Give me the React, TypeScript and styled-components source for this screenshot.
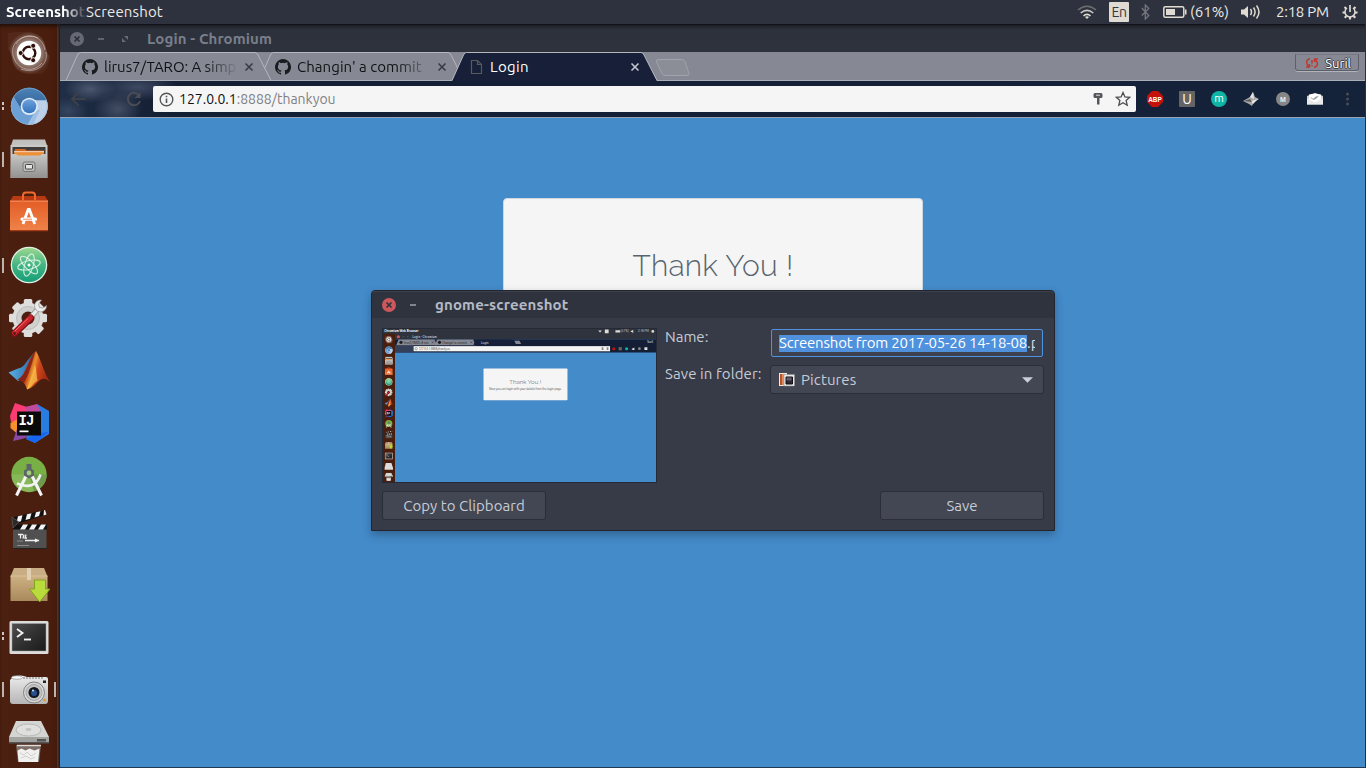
import React from "react";
import styled, { createGlobalStyle } from "styled-components";

const ui = `"Ubuntu", "Noto Sans", "Open Sans", sans-serif`;

const Global = createGlobalStyle`
  * { box-sizing: border-box; }
  html, body { margin: 0; padding: 0; overflow: hidden; }
  body { font-family: ${ui}; font-size: 15px; }
  svg { display: block; flex: none; }
`;

/* ---------- shared ---------- */

const Label = styled.span<{ $size?: number; $track?: number; $color?: string; $bold?: boolean }>`
  font-size: ${(p) => p.$size ?? 15}px;
  letter-spacing: ${(p) => p.$track ?? 0}px;
  color: ${(p) => p.$color ?? "#d3dae3"};
  font-weight: ${(p) => (p.$bold ? 700 : 400)};
  line-height: 20px;
  white-space: pre;
  flex: none;
`;

type IconProps = { x?: number; y?: number; width?: number; height?: number };
const box = (p: IconProps, size = 42) => ({ width: size, height: size, viewBox: `0 0 ${size} ${size}`, ...p });

/* ---------- launcher icons ---------- */

const Dash = (p: IconProps) => (
  <svg {...box(p)}>
    <defs>
      <radialGradient id="dashGlow"><stop offset="0.5" stopColor="#fff" stopOpacity="0.5" /><stop offset="1" stopColor="#fff" stopOpacity="0.04" /></radialGradient>
    </defs>
    <path d="M0 1C12-1 30-2 35 8c4 7 3 14 7 16-1 8-3 14-7 17C24 44 9 42 6 33 3 26 4 20 0 17Z" fill="url(#dashGlow)" />
    <path d="M5 23C2 8 18 1 30 6M38 20c3 14-12 22-25 17M8 12C16-1 34 2 37 18M34 31c-9 11-26 7-29-8" fill="none" stroke="#e9ddd8" strokeOpacity="0.5" />
    <circle cx="21" cy="21" r="12.2" fill="#fff" />
    <circle cx="21" cy="21" r="6.3" fill="none" stroke="#2f1009" strokeWidth="2.4" />
    <path d="M21 21 10 21M21 21l5.500-9.500M21 21l5.500 9.500" stroke="#fff" strokeWidth="1" />
    <circle cx="12.700" cy="21" r="2.500" fill="#2f1009" stroke="#fff" strokeWidth="0.900" />
    <circle cx="25.200" cy="13.800" r="2.500" fill="#2f1009" stroke="#fff" strokeWidth="0.900" />
    <circle cx="25.200" cy="28.200" r="2.500" fill="#2f1009" stroke="#fff" strokeWidth="0.900" />
  </svg>
);

const Chromium = (p: IconProps) => (
  <svg {...box(p)}>
    <defs>
      <linearGradient id="crCore" x1="0" y1="0" x2="0" y2="1"><stop offset="0" stopColor="#6ea3dc" /><stop offset="1" stopColor="#3272bd" /></linearGradient>
      <linearGradient id="crTop" x1="0" y1="0" x2="0" y2="1"><stop offset="0" stopColor="#4d83b8" /><stop offset="1" stopColor="#2f5f92" /></linearGradient>
    </defs>
    <circle cx="21.3" cy="21.3" r="18.4" fill="#b9cfe8" />
    <path d="M21.3 21.3 39 15.5A18.4 18.4 0 0 0 5.5 11.8L13 25Z" fill="url(#crTop)" />
    <path d="M5.5 11.8A18.4 18.4 0 0 0 19.5 39.7L28 25.5 14 25Z" fill="#6c9fd3" />
    <path d="M20 39.7A18.4 18.4 0 0 0 38.7 15.3H22L29 25Z" fill="#bdd1e9" />
    <path d="m29 25-9.500 14.700 6-1 6.500-14Z" fill="#91b7df" opacity="0.7" />
    <circle cx="21.3" cy="21.3" r="8.6" fill="#e3edf8" />
    <circle cx="21.3" cy="21.3" r="7" fill="url(#crCore)" />
    <circle cx="21.3" cy="21.3" r="18" fill="none" stroke="#8fb3da" strokeOpacity="0.6" strokeWidth="0.8" />
  </svg>
);

const Files = (p: IconProps) => (
  <svg {...box(p)}>
    <defs>
      <linearGradient id="fTop" x1="0" y1="0" x2="0" y2="1"><stop offset="0" stopColor="#bdbdbb" /><stop offset="1" stopColor="#e6e6e4" /></linearGradient>
      <linearGradient id="fFront" x1="0" y1="0" x2="0" y2="1"><stop offset="0" stopColor="#c6c6c4" /><stop offset="1" stopColor="#929290" /></linearGradient>
    </defs>
    <path d="M5 1.500h32l2 6v31.500H3V7.500Z" fill="url(#fTop)" />
    <path d="M2.500 7h37v33h-37Z" fill="#c9c9c7" />
    <path d="M4.500 9h33v10h-33Z" fill="#3e3d3b" />
    <path d="M7 11h10l1.500 1.500H36V17H6Z" fill="#d9661f" />
    <path d="M6 13.200h30v1.300H6Z" fill="#f4e3cf" />
    <path d="M6.500 14.500h29V18h-29Z" fill="#ee8f33" />
    <path d="M3 16h5l2 1.500h22l2-1.500h5v24H3Z" fill="url(#fFront)" />
    <rect x="15" y="24" width="12" height="9.500" rx="2" fill="#bbb" stroke="#777" />
    <rect x="17.500" y="26.500" width="7" height="4.500" rx="0.800" fill="#e6e6e6" stroke="#444" />
  </svg>
);

const Software = (p: IconProps) => (
  <svg {...box(p)}>
    <defs><linearGradient id="swBag" x1="0" y1="0" x2="0" y2="1"><stop offset="0" stopColor="#e35c26" /><stop offset="1" stopColor="#ef8349" /></linearGradient></defs>
    <path d="M5 5h32l3 5H2Z" fill="#b83a12" />
    <path d="M2 9.500h38v30H2Z" fill="url(#swBag)" />
    <path d="M2 9.500h38V11H2Z" fill="#f39a6b" opacity="0.6" />
    <path d="M15 12V4.500q0-3 3-3h6q3 0 3 3V12" fill="none" stroke="#ef6a2f" strokeWidth="2" />
    <path d="M15 33 20.200 18.500h1.200L26.700 33" fill="none" stroke="#fff" strokeWidth="2.800" />
    <rect x="12.500" y="26.500" width="16.500" height="3.200" rx="1.500" fill="#fff" />
    <path d="M15 28.200h9" stroke="#e9733a" strokeWidth="0.800" />
    <path d="M2 39h38v1.200H2Z" fill="#a43a15" />
  </svg>
);

const Atom = (p: IconProps) => (
  <svg {...box(p)}>
    <defs><linearGradient id="atG" x1="0" y1="0" x2="0" y2="1"><stop offset="0" stopColor="#9ad68f" /><stop offset="0.500" stopColor="#43b582" /><stop offset="1" stopColor="#169e78" /></linearGradient></defs>
    <circle cx="21" cy="21" r="18.300" fill="#dff0e3" />
    <circle cx="21" cy="21" r="17" fill="url(#atG)" />
    <g fill="none" stroke="#e9f7ee" strokeOpacity="0.850" strokeWidth="1.100">
      <ellipse cx="21" cy="21" rx="11.500" ry="4.300" transform="rotate(-14 21 21)" />
      <ellipse cx="21" cy="21" rx="11.500" ry="4.300" transform="rotate(46 21 21)" />
      <ellipse cx="21" cy="21" rx="11.500" ry="4.300" transform="rotate(106 21 21)" />
    </g>
    <circle cx="21" cy="21" r="1.500" fill="#fff" />
  </svg>
);

const Settings = (p: IconProps) => (
  <svg {...box(p)}>
    <g fill="#dededc">
      {[0, 45, 90, 135].map((a) => <rect key={a} x="15.800" y="2" width="8.500" height="38" rx="1.500" transform={`rotate(${a} 20 21)`} />)}
      <circle cx="20" cy="21" r="15.500" />
    </g>
    <circle cx="20" cy="21" r="11.500" fill="#d0d0ce" stroke="#bdbdbb" />
    <circle cx="20" cy="21" r="6.500" fill="#4a1f10" />
    <path d="m20 23 9-10" stroke="#8e8e8c" strokeWidth="5" />
    <path d="m21 22 9-10" stroke="#e9e9e8" strokeWidth="3.500" />
    <path d="M38.500 8.500a6 6 0 1 1-5-5.500l-3 4 1 3.500 3.500.5Z" fill="#ececec" stroke="#8c8c8a" strokeWidth="0.700" />
    <path d="M6.500 36.500 22.500 21" stroke="#7d0f14" strokeWidth="7" strokeLinecap="round" />
    <path d="M6.500 36 22.500 20.700" stroke="#c8242c" strokeWidth="5" strokeLinecap="round" />
    <path d="M7 34 20 21.500" stroke="#f0777a" strokeWidth="1" strokeLinecap="round" />
    <circle cx="6.500" cy="36.500" r="1.400" fill="#4a1f10" />
  </svg>
);

const Matlab = (p: IconProps) => (
  <svg {...box(p)}>
    <defs>
      <linearGradient id="mlA" x1="0.100" y1="0" x2="1" y2="0.300"><stop offset="0" stopColor="#7d1d12" /><stop offset="0.380" stopColor="#b93a1a" /><stop offset="0.530" stopColor="#e8922f" /><stop offset="0.680" stopColor="#cf481b" /><stop offset="1" stopColor="#a32c14" /></linearGradient>
      <linearGradient id="mlB"><stop offset="0" stopColor="#5cb0e6" /><stop offset="1" stopColor="#2463a0" /></linearGradient>
    </defs>
    <path d="M.500 22.500 10 18.500c3-.5 5-2 7-4.500 3-4 6-9 10.500-12L18 27l-8 4Z" fill="url(#mlB)" />
    <path d="M9.500 29.500c5-2 7-8 11-17 2-5 4.500-9.500 7.500-11.500 3.500 5 8 22 14 31-4-4-8-4-11-1-3.500 3.500-6.500 7-12 8.500-1-5-4.500-9-9.500-10Z" fill="url(#mlA)" />
    <path d="M9.500 29.500c6-2 8-9 12-18 2-5 4-9 6-10C24 12 21 26 15.500 33c-2-2.500-3.500-3-6-3.500Z" fill="#7f1f14" opacity="0.800" />
    <path d="M19 39.500c3-8 6-18 8-25 1.500 4 1.500 11 2.500 16-3.500 2-6.500 7.500-10.500 9Z" fill="#fbc64c" opacity="0.750" />
  </svg>
);

const Idea = (p: IconProps) => (
  <svg {...box(p)}>
    <path d="m7 0 15 5-2 14H3L2 13Z" fill="#fb3b74" />
    <path d="m2.500 20 7-4 5 10-6 4-6-5Z" fill="#f7902c" />
    <path d="M5 38 9 26l14-4 3 10-12 4Z" fill="#8a4aa3" />
    <path d="m29 1 12 7v23L27 40l-9-4 7-14Z" fill="#2a7de0" />
    <path d="m17 4 12-3 4 8-12 6Z" fill="#c04a9d" />
    <path d="m31 30 10-1-14 11-9-4Z" fill="#1766f3" />
    <rect x="9" y="8.500" width="24" height="24" fill="#0a0a0a" />
    <text x="10.500" y="22" fontFamily="Liberation Mono, monospace" fontWeight="700" fontSize="14" letterSpacing="-0.800" fill="#fff">IJ</text>
    <path d="M11.500 27.500h9v1.700h-9Z" fill="#fff" />
  </svg>
);

const AndroidStudio = (p: IconProps) => (
  <svg {...box(p)}>
    <circle cx="21" cy="18.500" r="17.700" fill="#79b045" />
    <path d="M21 18.500h17.700A17.700 17.700 0 0 1 26 35.500Z" fill="#5f9138" />
    <path d="M3.300 18.500a17.700 17.700 0 0 0 35.400 0Z" fill="#fff" opacity="0.100" />
    <path d="M9 27.500Q27 35 32.500 18.500" fill="none" stroke="#f1f1f1" strokeWidth="2.600" />
    <path d="m18.500 19-10 20.500M23.500 19l10 20.500" stroke="#f4f4f4" strokeWidth="3" strokeLinecap="butt" />
    <path d="M18.500 8h5v5l2.500 1.500v5L21 22.500 16 19.500v-5l2.500-1.500Z" fill="#5d6569" />
    <circle cx="21" cy="17" r="2.400" fill="#a3cf78" />
  </svg>
);

const Clapper = (p: IconProps) => (
  <svg {...box(p)}>
    <path d="M4 8.500 37 1l1.500 4.500L6 16Z" fill="#111" />
    <path d="m10 7.200 4.500-1-1.500 6-4.500 1.300ZM19 5.200l4.500-1-1.500 5.500L17.500 11ZM28 3.200l4.500-1L31 7l-4.500 1.500ZM36 1.300l1-.3 1.500 4.500-3 .9Z" fill="#f4f4f4" />
    <path d="M5 17h33.500v22.500H5Z" fill="#505050" />
    <path d="M5 15.500h34v5H5Z" fill="#111" />
    <path d="M15 15.500h5l-3 5h-5ZM24 15.500h5l-3 5h-5ZM33 15.500h5l-3 5h-5Z" fill="#f4f4f4" />
    <path d="m4 8 7 5-6 6Z" fill="#2a2a2a" stroke="#666" strokeWidth="0.600" />
    <path d="M10 25.500h5m-2.500 0v4m3.500-4-1 4m3-4-1 3.500h2M17 31.500h14m-4-1.500 3 1.500-3 1.500" stroke="#f0f0f0" strokeWidth="1.300" fill="none" />
    <path d="M9 32h6M9 36.500h12" stroke="#999" strokeWidth="0.800" />
    <path d="M5 39h34v1H5Z" fill="#222" />
  </svg>
);

const Package = (p: IconProps) => (
  <svg {...box(p)}>
    <defs><linearGradient id="pkG" x1="0" y1="0" x2="0" y2="1"><stop offset="0" stopColor="#cdb083" /><stop offset="1" stopColor="#a98a5c" /></linearGradient></defs>
    <path d="M6 6h30l3.500 8.500h-37Z" fill="#c8ad85" />
    <path d="M2.500 14h37v25h-37Z" fill="url(#pkG)" />
    <path d="M2.500 14h37" stroke="#d9c195" />
    <path d="M19 6h4v12h-4Z" fill="#e0cfb1" />
    <path d="M26.500 18h11v9h4.500L31.700 40 21.500 27h5Z" fill="#b9dc3c" stroke="#7ba016" strokeWidth="0.900" />
  </svg>
);

const Terminal = (p: IconProps) => (
  <svg {...box(p)}>
    <defs><linearGradient id="tmG" x1="0" y1="0" x2="1" y2="1"><stop offset="0" stopColor="#4f4f4f" /><stop offset="0.600" stopColor="#2c2c2c" /><stop offset="1" stopColor="#1b1b1b" /></linearGradient></defs>
    <rect x="1.500" y="6" width="39" height="33" rx="1.500" fill="#dcdcdc" />
    <rect x="4" y="8.500" width="34" height="27.500" fill="url(#tmG)" stroke="#a5a5a5" strokeWidth="0.500" />
    <path d="m9 14 5.500 4L9 22" fill="none" stroke="#f2f2f2" strokeWidth="1.900" />
    <path d="M16 24.500h7" stroke="#f2f2f2" strokeWidth="1.900" />
  </svg>
);

const Camera = (p: IconProps) => (
  <svg {...box(p)}>
    <defs><linearGradient id="cmG" x1="0" y1="0" x2="0" y2="1"><stop offset="0" stopColor="#ececec" /><stop offset="1" stopColor="#b5b5b5" /></linearGradient></defs>
    <path d="M5 9q8-3 14 0h19q2 0 2 2v22q0 3-3 3H5q-3 0-3-3V12Z" fill="url(#cmG)" />
    <ellipse cx="9" cy="9.500" rx="5.500" ry="1.800" fill="#f8f8f8" stroke="#8d8d8d" strokeWidth="0.700" />
    <path d="M15 10h20" stroke="#777" strokeDasharray="2 1" />
    <circle cx="26" cy="24.500" r="10.500" fill="#d8d8d8" stroke="#777" strokeWidth="0.900" />
    <circle cx="26" cy="24.500" r="8" fill="#c4c4c4" stroke="#999" strokeWidth="0.800" />
    <circle cx="26" cy="24.500" r="5.500" fill="#14171f" />
    <circle cx="26" cy="25" r="3" fill="#25508c" />
    <circle cx="25" cy="22.500" r="1" fill="#dfe8f3" />
    <path d="M35 12.500h3v2.500h-3Z" fill="#222" />
    <circle cx="36.500" cy="32" r="1.300" fill="#e69324" />
  </svg>
);

const Trash = (p: IconProps) => (
  <svg {...box(p)}>
    <path d="m8 24 2 17h21l2-17Z" fill="#8f8884" opacity="0.750" />
    <path d="m9.500 29.500 4-2 4 2 4-2 5 2 5-2-1.500 13.500H10.500Z" fill="#f0f0ef" />
    <path d="m12 32 4 2 3-3 4 4 5-3M13 37l5-2 5 3 4-2" stroke="#cfcfcf" fill="none" />
    <path d="M8 0h25l8 16v6H1v-6Z" fill="#d4d4d2" />
    <path d="M1 16h40v6H1Z" fill="#a3a3a1" />
    <path d="M1 21h40v1.500H1ZM29 18h9v2.500h-9Z" fill="#555" />
    <ellipse cx="20.500" cy="9" rx="12.500" ry="6" fill="#dfdfdd" stroke="#b7b7b5" />
    <ellipse cx="20.500" cy="8.500" rx="3" ry="1.400" fill="#c2c2c0" />
    <path d="M9 24.500h24" stroke="#dedede" strokeWidth="1.500" />
  </svg>
);

type Run = "none" | "single" | "multi";
const apps: { Icon: React.FC<IconProps>; run: Run; active?: boolean }[] = [
  { Icon: Dash, run: "none" }, { Icon: Chromium, run: "multi" }, { Icon: Files, run: "single" },
  { Icon: Software, run: "none" }, { Icon: Atom, run: "single" }, { Icon: Settings, run: "none" },
  { Icon: Matlab, run: "none" }, { Icon: Idea, run: "none" }, { Icon: AndroidStudio, run: "none" },
  { Icon: Clapper, run: "none" }, { Icon: Package, run: "none" }, { Icon: Terminal, run: "multi" },
  { Icon: Camera, run: "single", active: true }, { Icon: Trash, run: "none" },
];

/* ---------- desktop ---------- */

const Desktop = styled.div`
  position: relative;
  width: 1366px;
  height: 768px;
  display: flex;
  flex-direction: column;
  overflow: hidden;
  background: #2f343f;
`;

const TopBar = styled.header`
  height: 24px;
  flex: none;
  display: flex;
  align-items: center;
  padding: 0 8px 0 6px;
  background: #2e323e;
`;
const AppName = styled.div`
  width: 80px;
  overflow: hidden;
  display: flex;
  mask-image: linear-gradient(90deg, #000 58px, rgba(0, 0, 0, 0.1) 78px);
`;
const Indicators = styled.div`
  margin-left: auto;
  display: flex;
  align-items: center;
`;
const Slot = styled.div<{ $w: number }>`
  width: ${(p) => p.$w}px;
  height: 24px;
  display: flex;
  align-items: center;
  flex: none;
`;
const LangBadge = styled.div`
  width: 20px;
  height: 20px;
  display: grid;
  place-items: center;
  border-radius: 1px;
  background: #dfdbd2;
`;

const Workspace = styled.div`
  flex: 1;
  min-height: 0;
  display: flex;
`;

const Launcher = styled.nav`
  width: 60px;
  flex: none;
  padding-top: 2px;
  border-right: 1px solid #1d1e22;
  background: linear-gradient(90deg, #4b2011 0, #4a1e0e 85%, #451b0d 96%, #5a3526 97%, #3a2b26 100%);
  box-shadow: inset 0 4px 4px -2px rgba(0, 0, 0, 0.6);
`;
const LauncherItem = styled.div`
  height: 53px;
  display: flex;
  align-items: center;
  padding-top: 1px;
`;
const Mark = styled.div<{ $run: Run; $on: boolean; $right?: boolean }>`
  width: 2px;
  height: ${(p) => (p.$run === "multi" ? 8 : 15)}px;
  margin: ${(p) => (p.$right ? "0 0 0 4px" : "0 4px 0 2px")};
  flex: none;
  visibility: ${(p) => (p.$on ? "visible" : "hidden")};
  background: ${(p) => (p.$run === "multi" ? "linear-gradient(#cfc5c1 3px, transparent 3px 5px, #cfc5c1 5px)" : "#bfb3ae")};
`;

/* ---------- browser ---------- */

const Browser = styled.section`
  flex: 1;
  min-width: 0;
  display: flex;
  flex-direction: column;
  border-right: 1px solid #26303f;
  border-bottom: 1px solid #1f3a56;
`;
const WindowTitle = styled.div`
  height: 28px;
  flex: none;
  display: flex;
  align-items: center;
  padding: 1px 0 0 10px;
  background: linear-gradient(#0d0e12 0, #21242c 2px, #2d313c 6px, #2e323d);
`;
const TabStrip = styled.div`
  height: 29px;
  flex: none;
  display: flex;
  padding-left: 6px;
  background: linear-gradient(transparent 28px, #aaaeb6 28px), #868993;
`;
const Tab = styled.div<{ $active?: boolean; $level: number }>`
  position: relative;
  width: 206px;
  height: 29px;
  margin-right: -13px;
  display: flex;
  align-items: center;
  padding-left: ${(p) => (p.$active ? 18 : 16)}px;
  z-index: ${(p) => p.$level};
`;
const TabShape = styled.svg`
  position: absolute;
  inset: 0;
  z-index: -1;
`;
const TabText = styled.div<{ $fade?: boolean }>`
  width: 132px;
  overflow: hidden;
  display: flex;
  margin: 0 8px 0 6px;
  ${(p) => p.$fade && "mask-image: linear-gradient(90deg, #000 76%, transparent 102%);"}
`;
const NewTab = styled.div`
  margin: 7px 0 0 10px;
`;
const Profile = styled.div`
  margin: 2px 6px 0 auto;
  width: 64px;
  height: 17px;
  display: flex;
  align-items: center;
  justify-content: space-between;
  padding: 1px 7px 0 9px;
  border: 1px solid #5d606b;
  border-top-color: #767984;
  border-radius: 0 0 3px 3px;
  box-shadow: 0 1px 0 #b1b4bb;
  text-shadow: 1px 0 0 #3c3e44, -1px 0 0 #3c3e44, 0 1px 0 #3c3e44, 0 -1px 0 #3c3e44;
`;
const Toolbar = styled.div`
  height: 37px;
  flex: none;
  display: flex;
  align-items: center;
  border-bottom: 1px solid #9aa3b4;
  background:
    radial-gradient(ellipse 26px 14px at 30px 8px, rgba(120, 130, 155, 0.5), transparent),
    radial-gradient(ellipse 24px 18px at 58px 28px, rgba(130, 138, 160, 0.4), transparent),
    radial-gradient(ellipse 20px 14px at 8px 30px, rgba(90, 105, 135, 0.4), transparent),
    radial-gradient(ellipse 40px 14px at 78px 6px, rgba(100, 112, 140, 0.5), transparent),
    linear-gradient(90deg, #1f2e46 0, #141e33 110px, #151f36 800px, #14233a);
`;
const NavIcons = styled.div`
  width: 93px;
  flex: none;
  display: flex;
  padding-left: 10px;
  gap: 40px;
`;
const Omnibox = styled.div`
  width: 983px;
  height: 26px;
  flex: none;
  display: flex;
  align-items: center;
  padding: 0 5px 0 6px;
  background: #f5f5f5;
  border-radius: 2px;
`;
const Extensions = styled.div`
  flex: 1;
  display: flex;
  align-items: center;
  padding-left: 11px;
  gap: 16px;
`;
const Page = styled.main`
  flex: 1;
  min-height: 0;
  padding-top: 80px;
  background: #448bca;
`;
const Card = styled.div`
  width: 420px;
  height: 170px;
  margin: 0 auto 0 443px;
  display: flex;
  justify-content: center;
  padding-top: 46px;
  border: 1px solid #cfd8e0;
  border-radius: 4px;
  background: #f5f5f5;
`;
const Heading = styled.h1`
  margin: 0;
  font: 300 30px/42px Raleway, Lato, sans-serif;
  letter-spacing: 0.25px;
  color: #57646f;
  white-space: pre;
`;

/* ---------- save dialog ---------- */

const Dialog = styled.div`
  position: absolute;
  left: 371px;
  top: 290px;
  width: 684px;
  height: 241px;
  z-index: 5;
  display: flex;
  flex-direction: column;
  border: 1px solid #22252d;
  border-radius: 4px 4px 0 0;
  background: #373b47;
  box-shadow: 0 4px 10px rgba(0, 0, 0, 0.28);
`;
const DialogTitle = styled.div`
  height: 27px;
  flex: none;
  display: flex;
  align-items: center;
  padding-left: 10px;
  border-top: 1px solid #3c404c;
  border-radius: 3px 3px 0 0;
  background: #2f333e;
`;
const DialogBody = styled.div`
  height: 154px;
  margin-top: 10px;
  display: flex;
  padding: 0 11px 0 10px;
`;
const Preview = styled.div`
  width: 275px;
  height: 155px;
  border: 1px solid #252a36;
  margin-right: 8px;
  flex: none;
`;
const Form = styled.div`
  flex: 1;
  min-width: 0;
  display: flex;
  flex-direction: column;
  gap: 7px;
  padding-top: 1px;
`;
const Row = styled.div`
  display: flex;
  height: 29px;
`;
const RowLabel = styled.div<{ $up: number }>`
  width: 106px;
  flex: none;
  margin-top: ${(p) => -p.$up}px;
`;
const Entry = styled.div`
  flex: 1;
  height: 28px;
  min-width: 0;
  display: flex;
  align-items: center;
  padding: 0 7px;
  border: 1px solid #4f93e0;
  border-radius: 2px;
  background: #3e424e;
`;
const EntryClip = styled.div`
  flex: 1;
  min-width: 0;
  overflow: hidden;
  display: flex;
`;
const Selection = styled.div`
  background: #4f91dd;
  height: 17px;
  width: 248px;
  flex: none;
  display: flex;
  align-items: center;
  align-self: center;
`;
const Combo = styled.div`
  flex: 1;
  height: 29px;
  margin: 0 -1px;
  display: flex;
  align-items: center;
  gap: 6px;
  padding: 0 10px 0 8px;
  border: 1px solid #2b2e38;
  border-radius: 3px;
  background: #434754;
`;
const Push = styled.div`
  margin-left: auto;
`;
const Actions = styled.div`
  display: flex;
  justify-content: space-between;
  padding: 0 10px;
  margin-top: 9px;
`;
const Button = styled.button`
  width: 164px;
  height: 29px;
  display: flex;
  align-items: center;
  justify-content: center;
  padding: 0;
  border: 1px solid #2b2e38;
  border-radius: 3px;
  background: #434754;
  font-family: ${ui};
`;

/* ---------- small glyphs ---------- */

const Github = () => (
  <svg width="16" height="16" viewBox="0 0 16 16" fill="#1b1c20">
    <path d="M8 0a8 8 0 0 0-2.530 15.590c.4.070.550-.170.550-.380v-1.490c-2.230.490-2.690-.940-2.690-.940-.360-.930-.890-1.170-.890-1.170-.730-.5.050-.490.050-.490.800.060 1.230.830 1.230.830.710 1.220 1.870.870 2.330.660.070-.520.280-.870.510-1.070-1.780-.2-3.640-.890-3.640-3.950 0-.870.310-1.590.820-2.150-.080-.2-.360-1.020.080-2.120 0 0 .670-.210 2.200.820a7.600 7.600 0 0 1 4 0c1.530-1.040 2.200-.820 2.200-.820.440 1.100.160 1.920.080 2.120.510.560.820 1.270.820 2.150 0 3.070-1.870 3.750-3.650 3.950.290.250.540.730.540 1.480v2.200c0 .210.150.460.550.380A8 8 0 0 0 8 0Z" />
  </svg>
);
const TabClose = ({ c }: { c: string }) => (
  <svg width="10" height="10" viewBox="0 0 10 10"><path d="m1.500 1.500 7 7m0-7-7 7" stroke={c} strokeWidth="1.600" /></svg>
);
const WinClose = ({ bg, fg }: { bg: string; fg: string }) => (
  <svg width="14" height="14" viewBox="0 0 14 14"><circle cx="7" cy="7" r="7" fill={bg} /><path d="m4.500 4.500 5 5m0-5-5 5" stroke={fg} strokeWidth="1.700" /></svg>
);
const WinMin = ({ c, w }: { c: string; w: number }) => (
  <svg width={w} height="14" viewBox={`0 0 ${w} 14`}><path d="M0 7h6" stroke={c} strokeWidth="1.800" /></svg>
);

const BrowserTab = ({ title, active, level, track = 0 }: { title: string; active?: boolean; level: number; track?: number }) => (
  <Tab $active={active} $level={level}>
    <TabShape width="206" height="29" viewBox="0 0 206 29">
      <path d="M0 29 11.500 3Q12.500.500 14.500.500H189Q191 .500 192 3L205 29Z" fill={active ? "#172038" : "#868993"} />
      <path d="M0 28.500 11.500 3Q12.500.500 14.500.500H189Q191 .500 192 3L205 28.500" fill="none" stroke="#b4b7be" />
      {!active && <path d="M0 28.500h206" stroke="#aaaeb6" />}
    </TabShape>
    {active ? (
      <svg width="14" height="16" viewBox="0 0 14 16"><path d="M1.500 1.500h6l4 4v9h-10Zm6 0v4h4" fill="none" stroke="#5a5a5c" strokeWidth="1.200" /></svg>
    ) : <Github />}
    <TabText $fade={!active}>
      <Label $color={active ? "#fff" : "#101114"} $track={track}>{title}</Label>
    </TabText>
    <TabClose c={active ? "#c3c6ce" : "#3a3b41"} />
  </Tab>
);

const Wifi = () => (
  <svg width="20" height="14" viewBox="0 0 20 14" fill="none" stroke="#dfdbd2" strokeWidth="1.600">
    <path d="M1 5q9-7.500 18 0" opacity="0.350" /><path d="M3.700 8q6.300-5.300 12.600 0" opacity="0.900" /><path d="M6.500 10.800q3.500-2.800 7 0" /><path d="m8 12 2 2 2-2q-2-1.500-4 0Z" fill="#dfdbd2" stroke="none" />
  </svg>
);
const Bluetooth = () => (
  <svg width="9" height="16" viewBox="0 0 9 16"><path d="m.800 4 7 7.500-3.500 3.500V1l3.500 3.500-7 7" fill="none" stroke="#73767d" strokeWidth="1.300" /></svg>
);
const Battery = () => (
  <svg width="24" height="12" viewBox="0 0 24 12"><rect x="0.800" y="0.800" width="20" height="10.400" rx="1.500" fill="none" stroke="#dfdbd2" strokeWidth="1.500" /><path d="M3 3h9v6H3Z" fill="#dfdbd2" /><path d="M22 3.500h1.500v5H22Z" fill="#dfdbd2" /></svg>
);
const Volume = () => (
  <svg width="20" height="16" viewBox="0 0 20 16"><path d="M0 5.500h3L7 2v12l-4-3.500H0Z" fill="#dfdbd2" /><path d="M9.500 5q2 3 0 6M12.500 3.500q3.200 4.500 0 9M15.500 1.500q5 6.500 0 13" fill="none" stroke="#dfdbd2" strokeWidth="1.500" /></svg>
);
const Power = () => (
  <svg width="16" height="16" viewBox="0 0 16 16">
    <g stroke="#dfdbd2" fill="none">
      <path d="M5 4a5 5 0 1 0 6 0" strokeWidth="1.500" />
      <path d="M8 1v7" strokeWidth="1.700" />
      <path d="M8 13v2.500M3 8.500H.500M15.500 8.500H13M4.500 12l-1.800 1.800M11.500 12l1.800 1.800M4 4.500 2.500 3M12 4.500 13.500 3" strokeWidth="2.100" />
    </g>
  </svg>
);

/* ---------- captured desktop shown in the dialog ---------- */

const tinyTab = (x: number, label: string, fill: string, color: string) => (
  <g>
    <path d={`M${x} 81 l12 -28 h180 l12 28Z`} fill={fill} />
    <text x={x + 38} y="73" fill={color} fontSize="15">{label}</text>
  </g>
);
const Capture = () => (
  <svg width="273" height="153" viewBox="0 0 1366 768" preserveAspectRatio="none" fontFamily={ui}>
    <rect width="1366" height="768" fill="#448bca" />
    <rect width="1366" height="52" fill="#2f333e" />
    <text x="6" y="17" fontSize="15" fontWeight="700" fill="#fff" textLength="172">Chromium Web Browser</text>
    <g fill="#dfdbd2">
      <path d="M1077 7h18l-9 11ZM1110 3h19v18h-19ZM1163 6h24v12h-24ZM1240 9h6l6-6v18l-6-6h-6Z" />
      <text x="1190" y="17" fontSize="15">(61%)</text>
      <text x="1276" y="17" fontSize="15">2:18 PM</text>
      <circle cx="1350" cy="12" r="7" />
    </g>
    <circle cx="77" cy="39" r="8" fill="#cc575d" />
    <path d="M98 39h8m14 0h8" stroke="#888" strokeWidth="2" />
    <text x="147" y="44" fontSize="15" fontWeight="700" fill="#b9bec8">Login - Chromium</text>
    <rect x="60" y="52" width="1306" height="66" fill="#141f35" />
    <rect x="60" y="82" width="92" height="35" fill="#34405a" />
    {tinyTab(66, "lirus7/TARO: A sim", "#868993", "#111")}
    {tinyTab(259, "Changin' a commit", "#868993", "#111")}
    {tinyTab(452, "Login", "#172038", "#fff")}
    <g fill="#1b1c20"><circle cx="90" cy="67" r="8" /><circle cx="283" cy="67" r="8" /></g>
    <path d="m244 62 10 10m0-10-10 10m193-10 10 10m0-10-10 10" stroke="#222" strokeWidth="2" />
    <path d="M657 59h26l8 16h-26Z" fill="#868993" />
    <text x="1322" y="68" fontSize="15" fill="#fff">Suril</text>
    <rect x="153" y="86" width="983" height="26" fill="#f5f5f5" />
    <circle cx="166" cy="99" r="6" fill="none" stroke="#444" strokeWidth="2" />
    <text x="179" y="104" fontSize="14" fill="#333">127.0.0.1:8888/thankyou</text>
    <path d="M1094 92h9v14h-9Zm25 0h9v14h-9Z" fill="#888" />
    <circle cx="1155" cy="99" r="8" fill="#c4120b" />
    <rect x="1179" y="91" width="16" height="16" fill="#666" />
    <circle cx="1219" cy="99" r="8" fill="#0fb5a5" />
    <circle cx="1283" cy="99" r="7" fill="#8a8a8a" />
    <path d="M1243 101l15-8v12h-8ZM1308 92h15v13h-15Z" fill="#ddd" />
    <rect x="503" y="198" width="420" height="160" rx="4" fill="#f5f5f5" />
    <text x="632" y="276" fontSize="30" fontFamily="Raleway, Lato, sans-serif" fontWeight="300" fill="#3f4a56" textLength="160">Thank You !</text>
    <text x="530" y="307" fontSize="14" fontFamily="Raleway, Lato, sans-serif" fill="#333" textLength="364">Now you can login with your details from the login page.</text>
    <rect y="24" width="60" height="744" fill="#4a1e0e" />
    {apps.map(({ Icon }, i) => (i === 12 ? <path key={i} d="M14 672h28l8 24v10H8v-10Z" fill="#dcdcdc" /> : <Icon key={i} x={8} y={32 + i * 53} width={42} height={42} />))}
  </svg>
);

export default function App() {
  return (
    <Desktop>
      <Global />
      <TopBar>
        <AppName><Label $bold $color="#fff">Screenshot</Label></AppName>
        <Label $color="#eceae6" $track={0.15}>Screenshot</Label>
        <Indicators>
          <Slot $w={32}><Wifi /></Slot>
          <Slot $w={32}><LangBadge><Label $size={14} $color="#35383f" $track={-0.4}>En</Label></LangBadge></Slot>
          <Slot $w={22}><Bluetooth /></Slot>
          <Slot $w={27}><Battery /></Slot>
          <Slot $w={51}><Label $color="#eceae6">(61%)</Label></Slot>
          <Slot $w={35}><Volume /></Slot>
          <Slot $w={66}><Label $color="#eceae6" $track={-0.25}>2:18 PM</Label></Slot>
          <Power />
        </Indicators>
      </TopBar>
      <Workspace>
        <Launcher>
          {apps.map(({ Icon, run, active }, i) => (
            <LauncherItem key={i}>
              <Mark $run={run} $on={run !== "none"} />
              <Icon />
              <Mark $run={run} $on={!!active} $right />
            </LauncherItem>
          ))}
        </Launcher>
        <Browser>
          <WindowTitle>
            <WinClose bg="#666972" fg="#2b2f39" />
            <Slot $w={14} />
            <WinMin c="#666972" w={23} />
            <svg width="26" height="8" viewBox="0 0 26 8"><path d="M3 1h4v4ZM1 3v4h4Z" fill="#666972" /></svg>
            <Label $bold $color="#787f8b" $track={0.1}>Login - Chromium</Label>
          </WindowTitle>
          <TabStrip>
            <BrowserTab title="lirus7/TARO: A simp" level={2} track={-0.05} />
            <BrowserTab title="Changin' a commit" level={1} track={0.05} />
            <BrowserTab title="Login" active level={3} track={0.3} />
            <NewTab>
              <svg width="36" height="18" viewBox="0 0 36 18"><path d="M3 .500h24q2 0 3 2l4 12q.500 2-2 2H10q-2 0-3-2L1.500 3Q1 .500 3 .500Z" fill="#8b8d97" stroke="#a0a3ab" /></svg>
            </NewTab>
            <Profile>
              <svg width="14" height="12" viewBox="0 0 14 12"><g fill="none" stroke="#c0392f" strokeWidth="1.500"><path d="M5 1.500Q.500 3 2 7l2 3M1 10h3.500V7M9 10.500Q13.500 9 12 5l-2-3M13 2H9.500v3" /><path d="M7 3v3.500M7 8v1.300" /></g></svg>
              <Label $size={13} $color="#fff">Suril</Label>
            </Profile>
          </TabStrip>
          <Toolbar>
            <NavIcons>
              <svg width="16" height="16" viewBox="0 0 16 16" fill="none" stroke="#3c4049" strokeWidth="2"><path d="M15 8H2m6.500-6.500L2 8l6.500 6.500" /></svg>
              <svg width="16" height="16" viewBox="0 0 16 16" fill="none" stroke="#4a4d55" strokeWidth="2"><path d="M13.500 5A6.200 6.200 0 1 0 14 10" /><path d="M14.500 1v6h-6Z" fill="#4a4d55" stroke="none" /></svg>
            </NavIcons>
            <Omnibox>
              <svg width="15" height="15" viewBox="0 0 15 15"><circle cx="7.500" cy="7.500" r="6.300" fill="none" stroke="#55565a" strokeWidth="1.400" /><path d="M7.500 6.500v4.500M7.500 3.700v1.600" stroke="#55565a" strokeWidth="1.600" /></svg>
              <Slot $w={5} />
              <Label $size={14} $color="#111">127.0.0.1</Label>
              <Label $size={14} $color="#808083">:8888/thankyou</Label>
              <Push />
              <svg width="12" height="14" viewBox="0 0 12 14"><path d="M3 1h6q1.500 0 1.500 1.500v2Q10.500 6 9 6H7.500v6.500H5V6H3Q1.500 6 1.500 4.500v-2Q1.500 1 3 1Z" fill="#55565a" /><path d="M4 3.200h4" stroke="#ddd" /></svg>
              <Slot $w={11} />
              <svg width="16" height="16" viewBox="0 0 16 16"><path d="m8 1.500 1.900 4.400 4.800.4-3.600 3.200 1.100 4.700L8 11.700l-4.200 2.500 1.100-4.700L1.300 6.300l4.800-.4Z" fill="none" stroke="#4b4c50" strokeWidth="1.300" /></svg>
            </Omnibox>
            <Extensions>
              <svg width="16" height="16" viewBox="0 0 16 16"><path d="M5 0h6l5 5v6l-5 5H5l-5-5V5Z" fill="#c4120b" /><text x="8" y="11" textAnchor="middle" fontFamily="Liberation Sans, sans-serif" fontWeight="700" fontSize="8" textLength="13.500" lengthAdjust="spacingAndGlyphs" fill="#fff">ABP</text></svg>
              <svg width="16" height="16" viewBox="0 0 16 16"><rect width="16" height="16" rx="1" fill="#646464" /><text x="8" y="13" textAnchor="middle" fontFamily={ui} fontSize="14" fill="#fff">U</text></svg>
              <svg width="16" height="16" viewBox="0 0 16 16"><circle cx="8" cy="8" r="8" fill="#0fb5a5" /><text x="8" y="11" textAnchor="middle" fontFamily={ui} fontSize="11" fill="#fff">m</text></svg>
              <svg width="16" height="16" viewBox="0 0 16 16"><path d="m0 10 7-4 3-5 2 5 4 2-5 3-2 4-3-2Z" fill="#a9a9a9" /><path d="m7 6 3-5 1 7ZM8 10l7-2-5 5Z" fill="#e3e3e3" /><path d="m1 10 6-2 2 3Z" fill="#5a5a5a" /></svg>
              <svg width="16" height="16" viewBox="0 0 16 16"><circle cx="8" cy="8" r="7" fill="#868686" /><text x="8" y="10.500" textAnchor="middle" fontFamily="Liberation Sans, sans-serif" fontWeight="700" fontSize="7" fill="#eee">M</text></svg>
              <svg width="16" height="16" viewBox="0 0 16 16"><path d="m0 5 8-3 8 3v8.500H0Z" fill="#cfcfcf" /><path d="m2 3.500 6-1 6 1V9l-6 3-6-3Z" fill="#fff" /><path d="m4 6.500 2 2 3.500-3M7.500 8.500 11.500 5" stroke="#8a8a8a" fill="none" /><path d="m0 7 8 4.500 8-4.500v6.500H0Z" fill="#e9e9e9" /></svg>
              <svg width="16" height="16" viewBox="0 0 16 16" fill="#4a4d55"><circle cx="8.500" cy="3" r="1.500" /><circle cx="8.500" cy="8" r="1.500" /><circle cx="8.500" cy="13" r="1.500" /></svg>
            </Extensions>
          </Toolbar>
          <Page>
            <Card><Heading>Thank You !</Heading></Card>
          </Page>
        </Browser>
      </Workspace>
      <Dialog>
        <DialogTitle>
          <WinClose bg="#cc575d" fg="#2f333e" />
          <Slot $w={14} />
          <WinMin c="#8b909b" w={25} />
          <Label $bold $color="#b4bac5" $track={0.15}>gnome-screenshot</Label>
        </DialogTitle>
        <DialogBody>
          <Preview><Capture /></Preview>
          <Form>
            <Row>
              <RowLabel $up={2}><Label $color="#c6ccd6">Name:</Label></RowLabel>
              <Entry>
                <EntryClip>
                  <Selection><Label $color="#fff" $track={-0.19}>Screenshot from 2017-05-26 14-18-08</Label></Selection>
                  <Label>.png</Label>
                </EntryClip>
              </Entry>
            </Row>
            <Row>
              <RowLabel $up={1}><Label $color="#c6ccd6" $track={0.1}>Save in folder:</Label></RowLabel>
              <Combo>
                <svg width="16" height="16" viewBox="0 0 16 16"><path d="M0 1h8v13H0Z" fill="#f1e9e3" /><path d="M1 2h2v11H1Z" fill="#b5532c" /><path d="M3 2h2.500v11H3Z" fill="#e58a5c" /><path d="M5 2.500h10.500V14H5Z" fill="#e9e9e9" stroke="#8a8a8a" strokeWidth="0.500" /><path d="M7 5h6.500v7H7Z" fill="#2f2637" stroke="#111" /><path d="M7.500 5.500h5v3h-5Z" fill="#67596f" /></svg>
                <Label $color="#c6ccd6" $track={0.1}>Pictures</Label>
                <Push><svg width="11" height="6" viewBox="0 0 11 6"><path d="M0 .300h11L5.500 5.800Z" fill="#c9cfd9" /></svg></Push>
              </Combo>
            </Row>
          </Form>
        </DialogBody>
        <Actions>
          <Button><Label $color="#c6ccd6" $track={0.06}>Copy to Clipboard</Label></Button>
          <Button><Label $color="#c6ccd6">Save</Label></Button>
        </Actions>
      </Dialog>
    </Desktop>
  );
}
